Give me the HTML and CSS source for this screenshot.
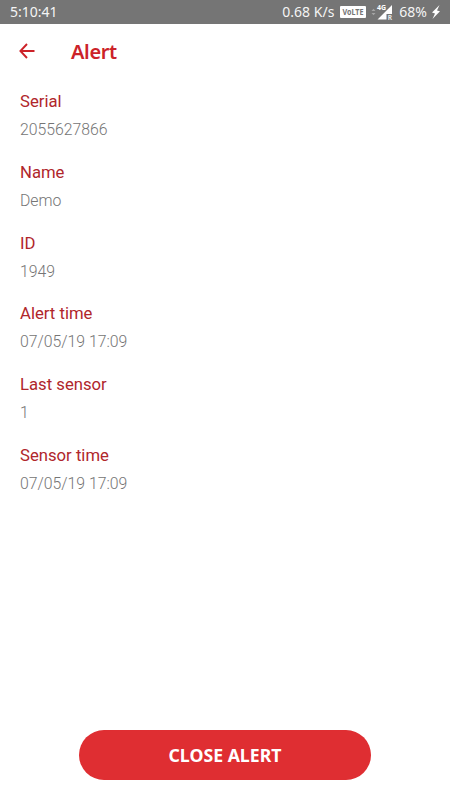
FILE: index.html
```html
<!DOCTYPE html>
<html lang="en">
<head>
<meta charset="utf-8">
<title>Alert</title>
<link rel="stylesheet" href="styles.css">
</head>
<body>
<div class="status">
  <span class="clock">5:10:41</span>
  <span class="speed">0.68 K/s</span>
  <svg class="volte" viewBox="0 0 26 12"><rect width="26" height="12" rx="1" fill="#fff"/><text x="2.500" y="9" textLength="21" lengthAdjust="spacingAndGlyphs">VoLTE</text></svg>
  <svg class="signal" viewBox="0 0 22 18"><path d="M.5 8 2.500 5.800 4.500 8zM.5 10 2.500 12.200 4.500 10z" fill="#a5a5a5"/><path d="M21 2V11H15.500V16.500H6.500z" fill="#fff"/><text x="6" y="7">4G</text><text class="roam" x="16.700" y="17">R</text></svg>
  <span class="battery">68%</span>
  <svg class="bolt" viewBox="0 0 10 14"><path d="M8.500 0 1 7.500 4 8.500 1.500 14 9 6.200 6 5.500z" fill="#fff"/></svg>
</div>
<header class="bar">
  <svg class="back" viewBox="0 0 16 16"><path d="M15.500 8H1.500M8 1 1.400 8 8 15" fill="none" stroke="#cc2229" stroke-width="1.900"/></svg>
  <h1>Alert</h1>
</header>
<dl class="fields">
  <div><dt>Serial</dt><dd>2055627866</dd></div>
  <div><dt>Name</dt><dd>Demo</dd></div>
  <div><dt>ID</dt><dd>1949</dd></div>
  <div><dt>Alert time</dt><dd>07/05/19 17:09</dd></div>
  <div><dt>Last sensor</dt><dd>1</dd></div>
  <div><dt>Sensor time</dt><dd>07/05/19 17:09</dd></div>
</dl>
<button class="close">CLOSE ALERT</button>
</body>
</html>
```
FILE: styles.css
```css
* { box-sizing: border-box; margin: 0; }
body { height: 800px; background: #fff; display: flex; flex-direction: column; font-family: Roboto, sans-serif; }
.status { height: 24px; background: #757575; color: #f4f4f4; display: flex; align-items: center; padding: 0 10px; font: 14px/24px "Noto Sans", sans-serif; white-space: nowrap; }
.speed { margin-left: auto; }
.volte { width: 26px; height: 12px; margin-left: 6px; }
.volte text { font: bold 8px "Noto Sans", sans-serif; fill: #757575; }
.signal { width: 22px; height: 18px; margin: 0 6px 0 5px; }
.signal text { font: bold 7px "Noto Sans", sans-serif; fill: #fff; }
.signal .roam { font-size: 6.5px; fill: #e8e8e8; }
.bolt { width: 10px; height: 14px; margin-left: 4px; margin-right: -1px; }
.bar { height: 56px; display: flex; align-items: center; padding-left: 19px; }
.back { width: 16px; height: 16px; margin: -2px 36px 0 0; }
h1 { font: 600 20px/28px "Noto Sans", sans-serif; letter-spacing: -.35px; color: #cc2229; }
.fields { padding: 9px 20px 0; font-size: 16.7px; }
.fields div { height: 70.8px; }
dt { line-height: 26px; color: #b0262b; }
dd { line-height: 28px; padding-top: 1px; font-size: 15.8px; font-weight: 300; color: #757575; }
.close { margin: auto auto 20px 79px; width: 292px; height: 50px; border: 0; border-radius: 25px; background: #df2e32; color: #fff; font: bold 17.7px "Noto Sans", sans-serif; }
```
